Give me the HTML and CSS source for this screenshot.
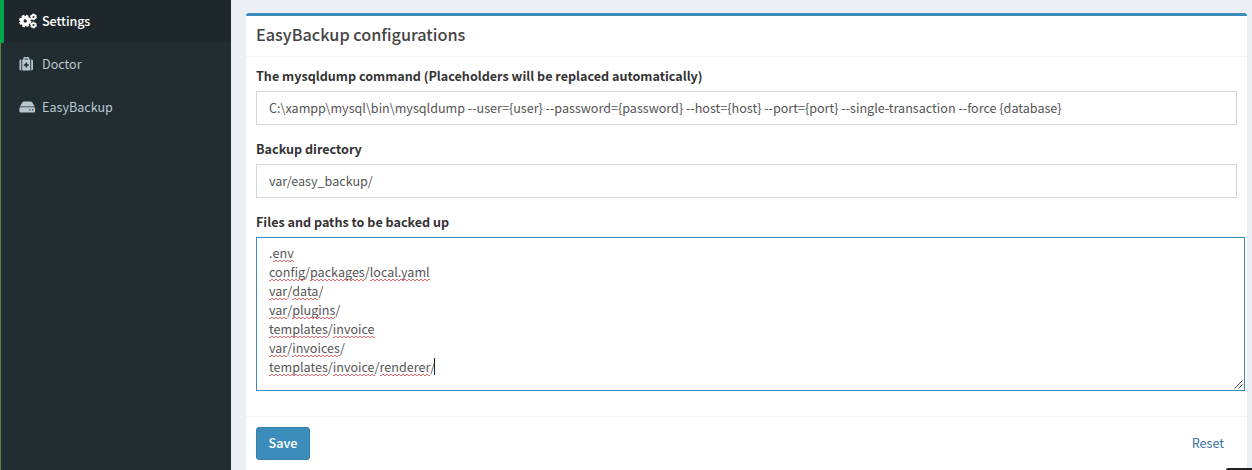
FILE: index.html
```html
<!DOCTYPE html>
<html lang="en">
<head>
<meta charset="utf-8">
<title>EasyBackup configurations</title>
<link rel="stylesheet" href="styles.css">
</head>
<body>
<div class="app">
  <nav class="sidebar">
    <a class="nav-item active">
      <svg class="icon" viewBox="0 0 18 16" width="18" height="16">
        <g fill="none" stroke="currentColor">
          <circle cx="6.2" cy="8" r="3.4" stroke-width="3.4"/>
          <circle cx="6.2" cy="8" r="5.4" stroke-width="1.700" stroke-dasharray="2.8 1.441"/>
          <circle cx="14.5" cy="3.9" r="1.9" stroke-width="1.800"/>
          <circle cx="14.5" cy="3.9" r="2.9" stroke-width="1" stroke-dasharray="1.8 1.237"/>
          <circle cx="14.5" cy="12.1" r="1.9" stroke-width="1.800"/>
          <circle cx="14.5" cy="12.1" r="2.9" stroke-width="1" stroke-dasharray="1.8 1.237"/>
        </g>
      </svg>
      <span>Settings</span>
    </a>
    <a class="nav-item">
      <svg class="icon" viewBox="0 0 18 16" width="18" height="16" fill="currentColor">
        <path d="M2.300 3.500v11h-.4A1.400 1.400 0 0 1 .5 13.100V4.900A1.400 1.400 0 0 1 1.900 3.500zM12.200 3.500h.4A1.400 1.400 0 0 1 14 4.900v8.200a1.400 1.400 0 0 1-1.400 1.400h-.4z"/>
        <path fill-rule="evenodd" d="M3.200 14.500v-11H4.300V2.400A1.300 1.300 0 0 1 5.600 1.100h3.400a1.300 1.300 0 0 1 1.300 1.300V3.500h1v11zM5.700 3.500h3.200V2.500H5.700zM6.500 6.500v1.700H4.800v1.600h1.700v1.700h1.600V9.800h1.700V8.200H8.100V6.500z"/>
      </svg>
      <span>Doctor</span>
    </a>
    <a class="nav-item">
      <svg class="icon" viewBox="0 0 18 16" width="18" height="16" fill="currentColor">
        <path d="M.9 7.500 3.300 3.500A2 2 0 0 1 5 2.500h6.600a2 2 0 0 1 1.700 1l2.400 4z"/>
        <path fill-rule="evenodd" d="M1.700 8.200h13.100a1.300 1.300 0 0 1 1.300 1.300v2.700a1.300 1.300 0 0 1-1.300 1.300H1.700A1.300 1.300 0 0 1 .4 12.200V9.500A1.300 1.300 0 0 1 1.700 8.200zM10.200 10.200v1.300h1.300v-1.300zM13 10.200v1.300h1.300v-1.300z"/>
      </svg>
      <span>EasyBackup</span>
    </a>
  </nav>
  <main class="content">
    <section class="box">
      <header class="box-header"><h3>EasyBackup configurations</h3></header>
      <div class="box-body">
        <label>The mysqldump command (Placeholders will be replaced automatically)</label>
        <div class="field">C:\xampp\mysql\bin\mysqldump --user={user} --password={password} --host={host} --port={port} --single-transaction --force {database}</div>
        <label>Backup directory</label>
        <div class="field">var/easy_backup/</div>
        <label>Files and paths to be backed up</label>
        <div class="area">
          <div>.<u>env</u></div>
          <div><u>config</u>/<u>packages</u>/<u>local.yaml</u></div>
          <div><u>var</u>/<u>data</u>/</div>
          <div><u>var</u>/<u>plugins</u>/</div>
          <div><u>templates</u>/<u>invoice</u></div>
          <div><u>var</u>/<u>invoices</u>/</div>
          <div><u>templates</u>/<u>invoice</u>/<u>renderer</u>/<i class="caret"></i></div>
          <svg class="grip" viewBox="0 0 9 9" width="9" height="9"><path d="M.5 8.500 8.500.5M4.500 8.500l4-4" fill="none" stroke="#555"/></svg>
        </div>
      </div>
      <footer class="box-footer">
        <button class="save">Save</button>
        <a class="reset">Reset</a>
      </footer>
    </section>
    <div class="debug-tab"></div>
  </main>
</div>
</body>
</html>
```
FILE: styles.css
```css
* { box-sizing: border-box; }
body {
  margin: 0;
  height: 470px;
  overflow: hidden;
  font-family: "Noto Sans CJK SC", "Open Sans", sans-serif;
  font-size: 12.58px;
  line-height: 19px;
  color: #333;
  background: #ecf0f5;
}
.app { display: flex; height: 470px; }
.sidebar { width: 231px; flex: none; background: #222d32; border-left: 1px solid #5b8548; }
.nav-item {
  display: flex;
  align-items: center;
  gap: 5px;
  height: 43px;
  padding: 0 0 2px 18px;
  color: #b8c7ce;
}
.nav-item.active {
  margin-left: -1px;
  padding-left: 15px;
  border-left: 4px solid #00a64b;
  background: #1e282c;
  color: #fff;
  font-weight: 500;
  letter-spacing: -.1px;
}
.icon { flex: none; }
.content { flex: 1; min-width: 0; padding: 13px 5px 0 15px; }
.box { height: 470px; background: #fff; border-top: 3px solid #3c8dbc; border-radius: 3px; box-shadow: 0 1px 1px rgba(0, 0, 0, .1); }
.box-header { height: 41px; padding: 8px 10px; border-bottom: 1px solid #f4f4f4; }
h3 { margin: 0; font-size: 16.24px; line-height: 20px; font-weight: 500; color: #444; }
.box-body { height: 359px; padding: 10px 10px 0; }
label { display: block; height: 24px; line-height: 17px; font-weight: 700; }
.field { height: 34px; margin-bottom: 15px; padding: 6px 12px; border: 1px solid #d2d6de; color: #555; white-space: nowrap; }
.area { position: relative; width: 989px; height: 154px; padding: 5px 12px; border: 1px solid #3c8dbc; color: #555; }
.area div { display: flex; height: 19px; }
u { text-decoration: none; position: relative; }
u::after {
  content: "";
  position: absolute;
  left: 0;
  right: 0;
  bottom: 0;
  height: 2px;
  background: conic-gradient(from 0deg at 50% 50%, #e5686f 25%, transparent 0 50%, #e5686f 0 75%, transparent 0) 0 0 / 4px 2px;
}
.caret { width: 1px; height: 17px; margin: 1px 0 0 -1px; background: #222; }
.grip { position: absolute; right: 1px; bottom: 1px; }
.box-footer { display: flex; justify-content: space-between; height: 54px; padding: 10px 23px 0 10px; border-top: 1px solid #f4f4f4; }
.save { width: 54px; height: 33px; padding: 0 0 2px; border: 1px solid #367fa9; border-radius: 3px; background: #3c8dbc; color: #fff; font: 500 12.6px/19px "Noto Sans CJK SC", sans-serif; }
.reset { padding-top: 6px; color: #3d74a8; }
.debug-tab { position: absolute; left: 1226px; top: 468px; width: 26px; height: 2px; border-top-left-radius: 2px; background: #222; }
```
